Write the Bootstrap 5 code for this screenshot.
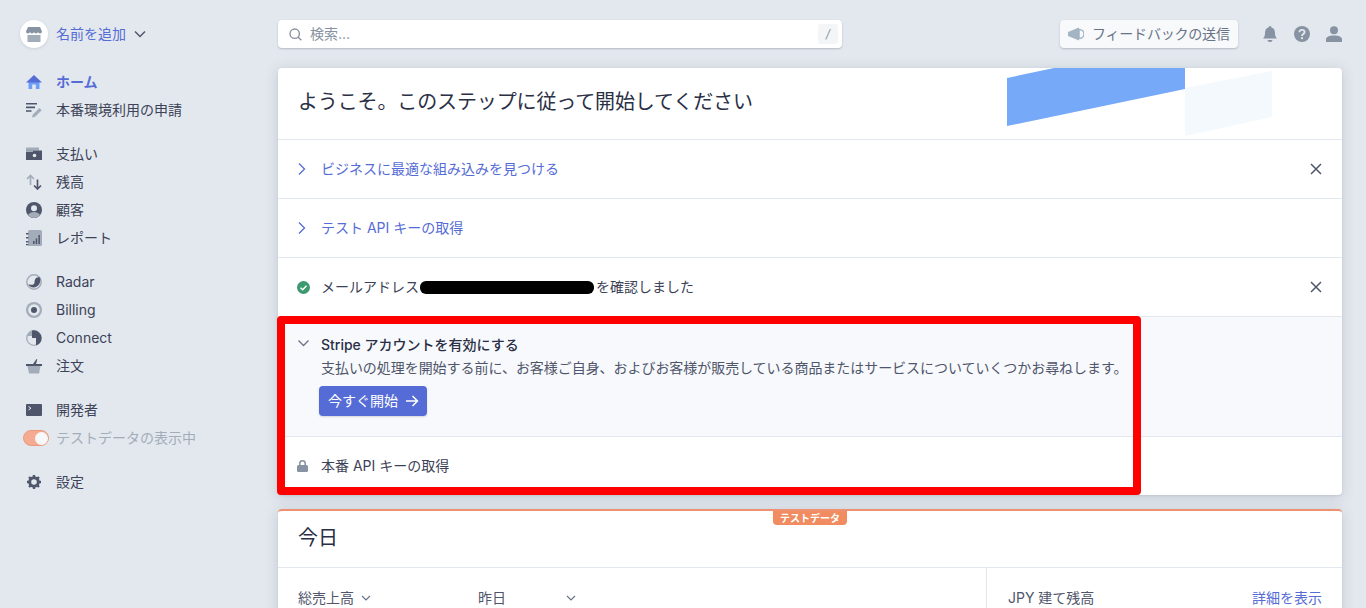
<!DOCTYPE html>
<html lang="ja">
<head>
  <meta charset="UTF-8" />
  <meta name="viewport" content="width=device-width, initial-scale=1.0"/>
  <title>ホーム</title>
  <link rel="stylesheet" href="https://cdn.jsdelivr.net/npm/bootstrap@5.3.3/dist/css/bootstrap.min.css" />
  <style>
    html, body { height: 608px; overflow: hidden; }
    body { background: #e3e8ee; color: #3c4257; font: 14px/20px Inter, "Noto Sans CJK JP", sans-serif; }
    a { text-decoration: none; }
    svg { flex: none; }
    .page-wrap { position: relative; height: 608px; overflow: hidden; }

    /* sidebar */
    .side { width: 278px; flex: none; padding: 20px 0 0 20px; }
    .acct { height: 28px; margin-bottom: 20px; }
    .acct-logo { width: 28px; height: 28px; border-radius: 50%; background: #fff; box-shadow: 0 1px 3px rgba(60,66,87,.15); }
    .acct-name { color: #556cd6; margin: 0 8px 0 8px; }
    .side-group { margin-bottom: 16px; }
    .side-item { height: 28px; color: #3c4257; }
    .side-ic { width: 36px; flex: none; padding-left: 6px; display: flex; }
    .side-item.active { color: #556cd6; font-weight: 600; }
    .side-item.muted { color: #a3acb9; }
    .tgl { width: 26px; height: 16px; border-radius: 8px; background: #f5ab92; border: 1px solid #eb9a7e; margin: 0 7px 0 3px; display: flex; justify-content: flex-end; align-items: center; padding-right: 0; }
    .tgl i { width: 13px; height: 13px; border-radius: 50%; background: #f7f8fa; display: block; }

    /* top bar */
    .main-col { width: 1064px; flex: none; }
    .top-bar { height: 68px; padding-top: 20px; align-items: flex-start; }
    .search-box { width: 564px; height: 28px; background: #fff; border-radius: 4px; box-shadow: 0 1px 2px rgba(60,66,87,.28); padding: 0 4px 0 11px; color: #8792a2; }
    .search-key { width: 20px; height: 20px; background: #f3f5f7; border-radius: 3px; font-size: 12px; color: #8792a2; text-align: center; font-style: italic; }
    .fb-btn { height: 28px; width: 178px; margin-left: auto; background: #f7f9fb; border-radius: 4px; box-shadow: 0 1px 2px rgba(60,66,87,.28); color: #697386; padding: 0 0 0 8px; gap: 8px; white-space: nowrap; letter-spacing: -.2px; }
    .top-ics { width: 104px; height: 28px; padding-left: 24px; gap: 16px; }

    /* cards */
    .panel { background: #fff; border-radius: 4px; box-shadow: 0 2px 14px rgba(60,66,87,.18), 0 1px 2px rgba(60,66,87,.1); position: relative; }
    .panel-head { height: 72px; border-bottom: 1px solid #e3e8ee; padding: 0 20px 3px; font-size: 20px; letter-spacing: -.13px; color: #2a2f45; overflow: hidden; position: relative; }
    .step { height: 59px; border-bottom: 1px solid #e3e8ee; padding: 0 20px 0 19px; }
    .step:last-child { border-bottom: 0; height: 58px; }
    .step-ic { width: 24px; flex: none; display: flex; }
    .step-link { color: #556cd6; }
    .step-close { margin-left: auto; display: flex; }
    .step-open { height: 120px; background: #f7f9fc; align-items: flex-start; padding-top: 18px; }
    .step-open .step-ic { padding-top: 4px; }
    .step-title { color: #2a2f45; font-weight: 500; }
    .step-desc { color: #4f566b; margin-top: 3px; letter-spacing: -.05px; }
    .go-btn { background: #556cd6; color: #fff; height: 30px; width: 108px; margin: 8px 0 0 -2px; border-radius: 4px; padding: 0 0 0 9px; gap: 7px; box-shadow: 0 1px 2px rgba(60,66,87,.2); }
    .deco { position: absolute; top: 0; left: 729px; }
    .mail-gap { width: 177px; }

    .today { margin-top: 14px; border-top: 2px solid #ee9072; height: 200px; }
    .today-head { height: 57px; border-bottom: 1px solid #e3e8ee; padding: 0 20px 2px; font-size: 20px; color: #2a2f45; }
    .test-tag { position: absolute; top: 0; left: 495px; width: 74px; height: 14px; background: #f08c5f; color: #fff; font-size: 10px; font-weight: 600; line-height: 14px; text-align: center; border-radius: 0 0 4px 4px; }
    .today-body { height: 100px; }
    .sales-col { width: 709px; padding: 20px 0 0 20px; color: #4f566b; border-right: 1px solid #e3e8ee; }
    .sales-a { width: 180px; gap: 7px; }
    .sales-b { width: 98px; justify-content: space-between; }
    .bal-col { flex: 1; padding: 20px 20px 0 21px; color: #4f566b; }
    .bal-col a { color: #556cd6; }

    /* annotations laid over the screenshot */
    .red-frame { position: absolute; left: 277px; top: 316px; width: 864px; height: 179px; border: 8px solid #f00; border-radius: 4px; pointer-events: none; }
    .redact { position: absolute; left: 420px; top: 281px; width: 174px; height: 13px; background: #000; border-radius: 6px; }
  </style>
</head>
<body>
  <div class="page-wrap d-flex">

    <!-- menu lateral -->
    <nav class="side">
      <div class="acct d-flex align-items-center">
        <span class="acct-logo d-flex align-items-center justify-content-center">
          <svg width="16" height="15" viewBox="0 0 16 15"><path d="M2 0h12l2 4.500a2 2 0 0 1-4 0 2 2 0 0 1-4 0 2 2 0 0 1-4 0 2 2 0 0 1-4 0z" fill="#8792a2"/><path d="M1.500 8h13v7h-13z" fill="#a3acb9"/></svg>
        </span>
        <span class="acct-name">名前を追加</span>
        <svg width="12" height="8" viewBox="0 0 12 8"><path d="M1 1.500l5 5 5-5" fill="none" stroke="#4f566b" stroke-width="1.500"/></svg>
      </div>

      <div class="side-group">
        <a class="side-item active d-flex align-items-center" href="#"><span class="side-ic"><svg width="16" height="16" viewBox="0 0 16 16"><path d="M2.500 7h11v8h-3.700v-4.500H6.200V15H2.500z" fill="#6c9ef8"/><path d="M8 1L0 8.500h16z" fill="#556cd6"/></svg></span>ホーム</a>
        <a class="side-item d-flex align-items-center" href="#"><span class="side-ic"><svg width="16" height="16" viewBox="0 0 16 16"><path d="M0 1h11v1.600H0zM0 4.600h9v1.600H0zM0 8.200h5.500v1.600H0z" fill="#4f566b"/><path d="M6 15.500l.8-3L13.500 6l2.200 2.200-6.600 6.500z" fill="#a3acb9"/></svg></span>本番環境利用の申請</a>
      </div>

      <div class="side-group">
        <a class="side-item d-flex align-items-center" href="#"><span class="side-ic"><svg width="16" height="16" viewBox="0 0 16 16"><path d="M0 1.500h13v3H0z" fill="#a3acb9"/><path d="M0 4.500h16V14H0z" fill="#4f566b"/><path d="M0 4.500h7V6H0z" fill="#a3acb9"/><circle cx="8.500" cy="9.500" r="1.800" fill="#e3e8ee"/></svg></span>支払い</a>
        <a class="side-item d-flex align-items-center" href="#"><span class="side-ic"><svg width="16" height="16" viewBox="0 0 16 16"><path d="M4.500 11V1.500M1 5l3.500-3.500L8 5" fill="none" stroke="#a3acb9" stroke-width="1.700"/><path d="M11.500 5.500V15M8 11.500l3.500 3.500 3.500-3.500" fill="none" stroke="#4f566b" stroke-width="1.700"/></svg></span>残高</a>
        <a class="side-item d-flex align-items-center" href="#"><span class="side-ic"><svg width="16" height="16" viewBox="0 0 16 16"><circle cx="8" cy="8" r="8" fill="#4f566b"/><path d="M1.800 13c1.500-2 3.700-3 6.200-3s4.700 1 6.200 3A8 8 0 0 1 1.800 13z" fill="#a3acb9"/><circle cx="8" cy="6.200" r="3" fill="#e3e8ee"/></svg></span>顧客</a>
        <a class="side-item d-flex align-items-center" href="#"><span class="side-ic"><svg width="16" height="16" viewBox="0 0 16 16"><rect x="2" width="14" height="16" rx="1.500" fill="#a3acb9"/><path d="M0 3h2.500v1.500H0zM0 7h2.500v1.500H0zM0 11h2.500v1.500H0zM0 14h2.500v1.200H0z" fill="#4f566b"/><path d="M7 11h1.500v3H7zM9.700 8.500h1.500V14H9.700zM12.400 5h1.500v9h-1.500z" fill="#4f566b"/></svg></span>レポート</a>
      </div>

      <div class="side-group">
        <a class="side-item d-flex align-items-center" href="#"><span class="side-ic"><svg width="16" height="16" viewBox="0 0 16 16"><circle cx="8" cy="8" r="7.200" fill="#e3e8ee" stroke="#a3acb9" stroke-width="1.500"/><path d="M14 3.500c1.500 4.500-1.500 10-6.500 10C5 13.500 3 12 2.500 10c3 1.700 6 .8 6-1.800 0-3.700 2.300-5.500 5.500-4.700z" fill="#4f566b"/></svg></span>Radar</a>
        <a class="side-item d-flex align-items-center" href="#"><span class="side-ic"><svg width="16" height="16" viewBox="0 0 16 16"><circle cx="8" cy="8" r="8" fill="#a3acb9"/><circle cx="8" cy="8" r="5.800" fill="#e3e8ee"/><circle cx="8" cy="8" r="3" fill="#4f566b"/></svg></span>Billing</a>
        <a class="side-item d-flex align-items-center" href="#"><span class="side-ic"><svg width="16" height="16" viewBox="0 0 16 16"><circle cx="8" cy="8" r="7.300" fill="#e3e8ee" stroke="#a3acb9" stroke-width="1.300"/><path d="M6 .5a8 8 0 0 1 9.500 7.500 8 8 0 0 1-5.500 7.500V8H6z" fill="#4f566b"/><path d="M6 .8V6H.8A8 8 0 0 1 6 .8z" fill="#a3acb9"/></svg></span>Connect</a>
        <a class="side-item d-flex align-items-center" href="#"><span class="side-ic"><svg width="16" height="16" viewBox="0 0 16 16"><path d="M1.500 8h13L13 15.500H3z" fill="#a3acb9"/><path d="M0 6h16v2H0z" fill="#4f566b"/><path d="M7 6l3.500-5 .8.500L10 6z" fill="#4f566b"/></svg></span>注文</a>
      </div>

      <div class="side-group">
        <a class="side-item d-flex align-items-center" href="#"><span class="side-ic"><svg width="16" height="12" viewBox="0 0 16 12"><rect width="16" height="12" rx="1" fill="#4f566b"/><path d="M2.500 2.500l2.500 1.700-2.500 1.700" fill="none" stroke="#e3e8ee" stroke-width="1"/></svg></span>開発者</a>
        <a class="side-item muted d-flex align-items-center" href="#"><span class="tgl"><i></i></span>テストデータの表示中</a>
      </div>

      <a class="side-item d-flex align-items-center" href="#"><span class="side-ic"><svg width="16" height="16" viewBox="0 0 16 16"><path d="M8 3.700a4.300 4.300 0 1 0 0 8.600 4.300 4.300 0 0 0 0-8.600z" fill="none" stroke="#4f566b" stroke-width="3"/><path d="M8 1v3M8 12v3M1 8h3M12 8h3M3 3l2.200 2.200M10.800 10.800L13 13M13 3l-2.200 2.200M5.200 10.800L3 13" stroke="#4f566b" stroke-width="2.400"/></svg></span>設定</a>
    </nav>

    <div class="main-col">
      <!-- barra de cima -->
      <div class="top-bar d-flex">
        <div class="search-box d-flex align-items-center">
          <svg width="13" height="13" viewBox="0 0 13 13"><circle cx="5.700" cy="5.700" r="4.700" fill="none" stroke="#8792a2" stroke-width="1.400"/><path d="M9 9l3.300 3.300" stroke="#8792a2" stroke-width="1.400"/></svg>
          <span class="ms-2">検索...</span>
          <span class="search-key ms-auto">/</span>
        </div>
        <div class="fb-btn d-flex align-items-center">
          <svg width="16" height="14" viewBox="0 0 16 14"><path d="M0 5l11-4.500v13L0 9z" fill="#a3b5c4"/><path d="M11 2.500a5 4.500 0 0 1 0 9z" fill="none" stroke="#a3b5c4" stroke-width="1.500"/></svg>
          <span>フィードバックの送信</span>
        </div>
        <div class="top-ics d-flex align-items-center">
          <svg width="16" height="16" viewBox="0 0 16 16"><path d="M8 0a1.500 1.500 0 0 1 1.500 1.500C12 2.300 13 4.500 13 7c0 3 .7 4 2 5.500H1C2.300 11 3 10 3 7c0-2.500 1-4.700 3.500-5.500A1.500 1.500 0 0 1 8 0z" fill="#8792a2"/><path d="M5.500 14h5a2.500 2 0 0 1-5 0z" fill="#8792a2"/></svg>
          <svg width="16" height="16" viewBox="0 0 16 16"><circle cx="8" cy="8" r="8" fill="#8792a2"/><path d="M5.400 6.200C5.400 4.700 6.600 3.800 8 3.800s2.600.9 2.600 2.200c0 2-2.600 2-2.600 3.900" fill="none" stroke="#e3e8ee" stroke-width="1.800"/><circle cx="8" cy="12.200" r="1.100" fill="#e3e8ee"/></svg>
          <svg width="16" height="16" viewBox="0 0 16 16"><circle cx="8" cy="4.200" r="4" fill="#8792a2"/><path d="M0 16v-2.500C0 11 3 9.500 8 9.500s8 1.500 8 4V16z" fill="#8792a2"/></svg>
        </div>
      </div>

      <!-- passos -->
      <div class="panel">
        <div class="panel-head d-flex align-items-center">
          ようこそ。このステップに従って開始してください
          <svg class="deco" width="270" height="71" viewBox="0 0 270 71"><path d="M178 20L265 3v46L178 68z" fill="#f3f9fd"/><path d="M0 10L47 0h131v21L0 58z" fill="#76a9f7"/></svg>
        </div>
        <div class="step d-flex align-items-center">
          <span class="step-ic"><svg width="9" height="14" viewBox="0 0 9 14"><path d="M2 1.500L7.500 7 2 12.500" fill="none" stroke="#556cd6" stroke-width="1.300"/></svg></span>
          <a class="step-link" href="#">ビジネスに最適な組み込みを見つける</a>
          <span class="step-close"><svg width="12" height="12" viewBox="0 0 12 12"><path d="M1 1l10 10M11 1L1 11" stroke="#4f566b" stroke-width="1.500"/></svg></span>
        </div>
        <div class="step d-flex align-items-center">
          <span class="step-ic"><svg width="9" height="14" viewBox="0 0 9 14"><path d="M2 1.500L7.500 7 2 12.500" fill="none" stroke="#556cd6" stroke-width="1.300"/></svg></span>
          <a class="step-link" href="#">テスト API キーの取得</a>
        </div>
        <div class="step d-flex align-items-center">
          <span class="step-ic"><svg width="13" height="13" viewBox="0 0 13 13"><circle cx="6.500" cy="6.500" r="6.500" fill="#3d9970"/><path d="M3.500 6.700l2.200 2.100 3.800-4" fill="none" stroke="#fff" stroke-width="1.500"/></svg></span>
          <span>メールアドレス<span class="d-inline-block mail-gap"></span>を確認しました</span>
          <span class="step-close"><svg width="12" height="12" viewBox="0 0 12 12"><path d="M1 1l10 10M11 1L1 11" stroke="#4f566b" stroke-width="1.500"/></svg></span>
        </div>
        <div class="step step-open d-flex">
          <span class="step-ic"><svg width="13" height="9" viewBox="0 0 13 9"><path d="M1.500 1.500l5 5 5-5" fill="none" stroke="#697386" stroke-width="1.300"/></svg></span>
          <div>
            <div class="step-title">Stripe アカウントを有効にする</div>
            <div class="step-desc">支払いの処理を開始する前に、お客様ご自身、およびお客様が販売している商品またはサービスについていくつかお尋ねします。</div>
            <a class="go-btn d-flex align-items-center" href="#">今すぐ開始
              <svg width="14" height="12" viewBox="0 0 14 12"><path d="M1 6h11.500M7.500 1l5 5-5 5" fill="none" stroke="#fff" stroke-width="1.500"/></svg>
            </a>
          </div>
        </div>
        <div class="step d-flex align-items-center">
          <span class="step-ic"><svg width="11" height="12" viewBox="0 0 11 12"><rect y="5" width="11" height="7" rx="1.500" fill="#8792a2"/><path d="M2.800 5.500V3.500a2.700 2.700 0 0 1 5.400 0v2" fill="none" stroke="#8792a2" stroke-width="1.500"/></svg></span>
          <span>本番 API キーの取得</span>
        </div>
      </div>

      <!-- hoje -->
      <div class="panel today">
        <span class="test-tag">テストデータ</span>
        <div class="today-head d-flex align-items-center">今日</div>
        <div class="today-body d-flex">
          <div class="sales-col d-flex align-items-start">
            <span class="sales-a d-flex align-items-center">総売上高 <svg width="10" height="6" viewBox="0 0 10 6"><path d="M1 1l4 4 4-4" fill="none" stroke="#697386" stroke-width="1.200"/></svg></span>
            <span class="sales-b d-flex align-items-center">昨日 <svg width="10" height="6" viewBox="0 0 10 6"><path d="M1 1l4 4 4-4" fill="none" stroke="#697386" stroke-width="1.200"/></svg></span>
          </div>
          <div class="bal-col d-flex justify-content-between align-items-start">
            <span>JPY 建て残高</span>
            <a href="#">詳細を表示</a>
          </div>
        </div>
      </div>
    </div>

    <!-- marcas por cima da captura -->
    <div class="redact"></div>
    <div class="red-frame"></div>
  </div>
  <script src="https://cdn.jsdelivr.net/npm/bootstrap@5.3.3/dist/js/bootstrap.bundle.min.js"></script>
</body>
</html>
